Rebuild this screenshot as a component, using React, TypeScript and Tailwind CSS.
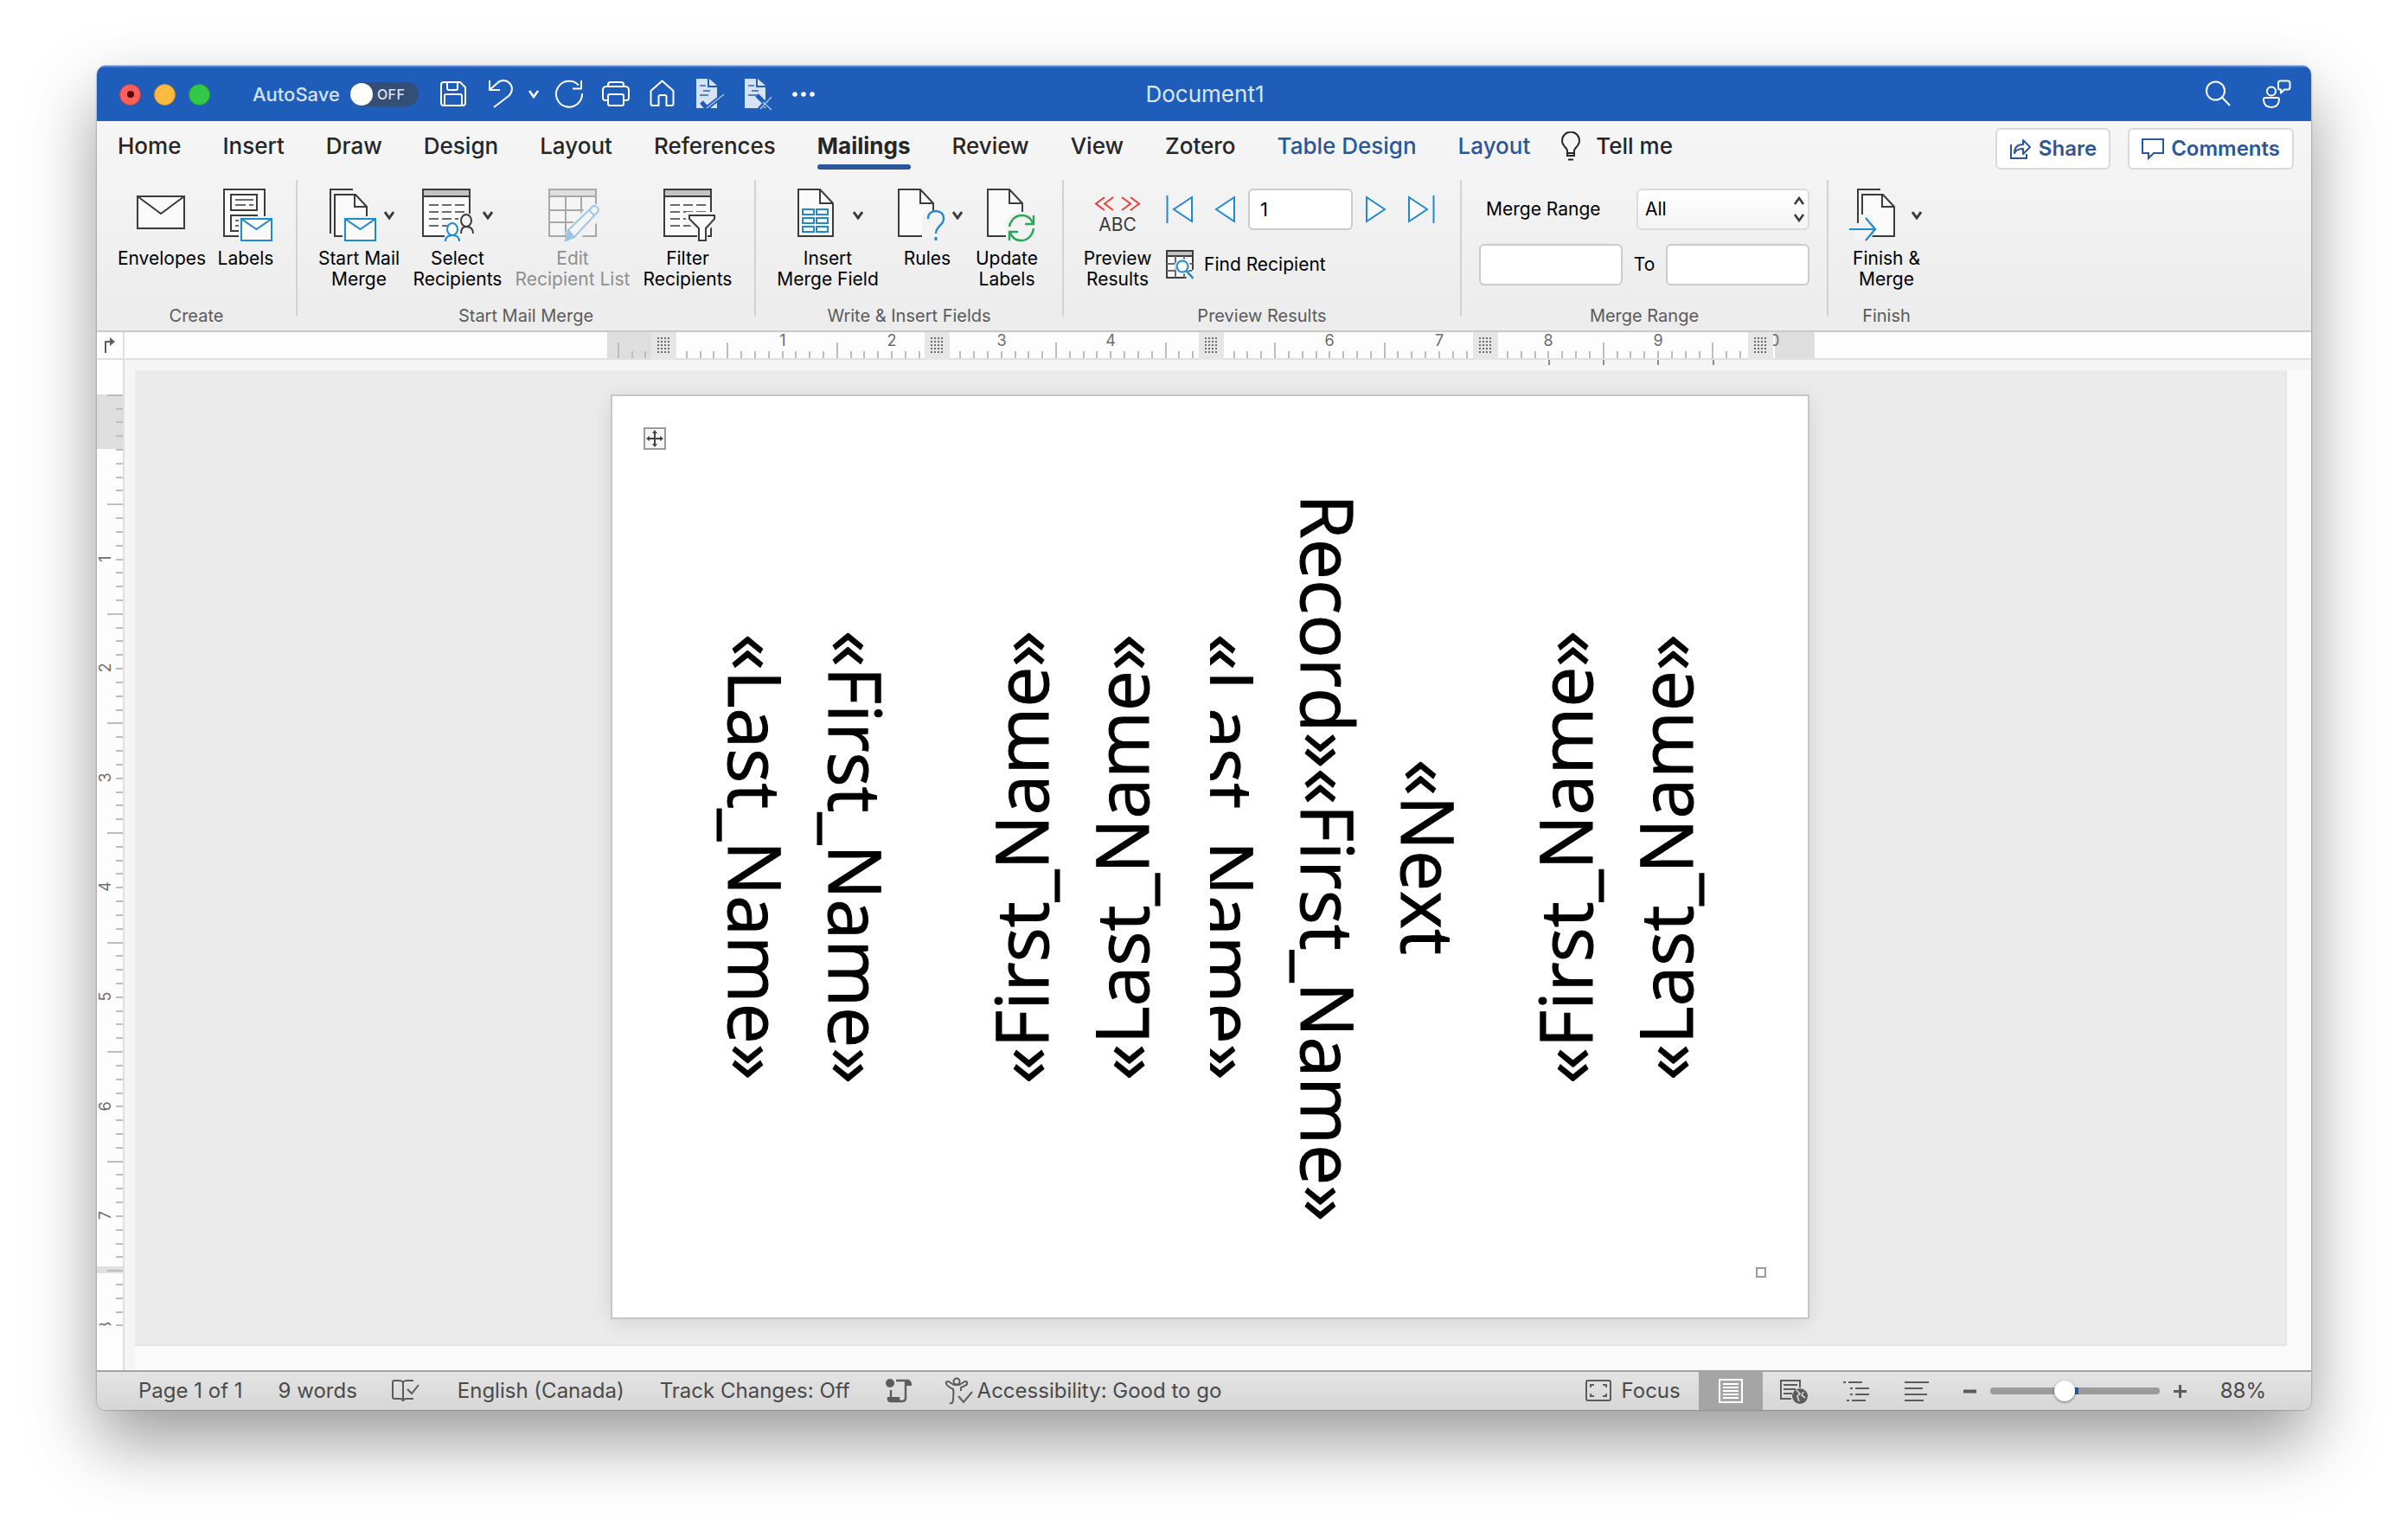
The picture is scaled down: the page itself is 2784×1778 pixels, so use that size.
import React from "react";

type Kids = { children?: React.ReactNode };

const DARK = "#3b3b3b";
const BLUE = "#1f8ad0";
const PAPER = "#fafafa";

/* ---------- small shared pieces ---------- */

function Chevron() {
  return (
    <svg width="12" height="10" viewBox="0 0 12 10" fill="none" stroke={DARK} strokeWidth="3" className="shrink-0">
      <path d="M1 1l5 7 5-7" />
    </svg>
  );
}

function Icon({ children }: Kids) {
  return (
    <svg width="60" height="62" viewBox="0 0 60 62" fill="none" stroke={DARK} strokeWidth="2" className="shrink-0 overflow-visible">
      {children}
    </svg>
  );
}

function MiniEnvelope({ x }: { x: number }) {
  return (
    <g transform={`translate(${x} 35)`}>
      <rect x="-3" y="-3" width="40" height="30" fill="#f3f3f3" stroke="none" />
      <rect x="0" y="0" width="35" height="25" fill={PAPER} stroke={BLUE} />
      <path d="M0 0l17.5 12L35 0" stroke={BLUE} />
    </g>
  );
}

function ListSheet() {
  return (
    <>
      <rect x="1" y="1" width="54" height="54" fill={PAPER} />
      <rect x="1" y="1" width="54" height="8" fill="#c4c2c2" />
      <path d="M8 19h41M8 27h41M8 35h41M8 43h41" stroke="#6a6a6a" strokeDasharray="11 4" />
    </>
  );
}

function Sheet({ x = 6 }: { x?: number }) {
  return (
    <g transform={`translate(${x} 0)`}>
      <path d="M1 1h25l15 16v38H1z" fill={PAPER} />
      <path d="M26 1v16h15" />
    </g>
  );
}

function StackedSheets() {
  return (
    <>
      <path d="M34 1H8v51" />
      <path d="M13 7h24l13 14v34H13z" fill={PAPER} />
      <path d="M36 7v14h14" />
    </>
  );
}

type ToolProps = {
  icon: React.ReactNode;
  lines: string[];
  width: string;
  menu?: boolean;
  disabled?: boolean;
};

function Tool({ icon, lines, width, menu, disabled }: ToolProps) {
  return (
    <button
      type="button"
      disabled={disabled}
      className={`flex flex-col items-center ${width} ${disabled ? "text-[#8f8f8f]" : "text-black"}`}
    >
      <span className={`flex h-[62px] items-center gap-[10px] ${disabled ? "opacity-40" : ""}`}>
        {icon}
        {menu && <Chevron />}
      </span>
      <span className="mt-[7px] text-[21px] leading-6 whitespace-nowrap">
        {lines.map((l) => (
          <span key={l} className="block">
            {l}
          </span>
        ))}
      </span>
    </button>
  );
}

function Group({ name, width, children, last }: Kids & { name: string; width: string; last?: boolean }) {
  return (
    <section
      aria-label={name}
      className={`flex h-[158px] shrink-0 flex-col justify-between ${width} ${last ? "" : "border-r-2 border-[#d2d2d2]"}`}
    >
      <div className="flex pt-[10px]">{children}</div>
      <h2 className="-mb-2.5 text-center text-[20px] leading-[22px] text-[#5b5b5b]">{name}</h2>
    </section>
  );
}

/* ---------- title bar ---------- */

function QuickButton({ label, children }: Kids & { label: string }) {
  return (
    <button type="button" aria-label={label} className="flex shrink-0 items-center">
      {children}
    </button>
  );
}

function Line({ w = 32, children }: Kids & { w?: number }) {
  return (
    <svg width={w} height="34" viewBox={`0 0 ${w} 34`} fill="none" stroke="#fff" strokeWidth="2" strokeLinejoin="round" className="overflow-visible">
      {children}
    </svg>
  );
}

function DocBadge({ children }: Kids) {
  return (
    <svg width="34" height="38" viewBox="0 0 34 38" fill="none">
      <path d="M1 1h13v10h11v24H1z" fill="#d7e3f5" />
      <path d="M16 1l9 8h-9z" fill="#d7e3f5" />
      <path d="M5 9h7M9 15h8M5 20h10" stroke="#2c65bb" strokeWidth="1.6" />
      {children}
    </svg>
  );
}

function TitleBar() {
  return (
    <header className="flex h-16 items-center border-t-2 border-[#4c80cb] bg-[#1f5dba] pr-6 pl-[26px] text-white">
      <div className="flex grow basis-0 items-center">
        <div className="flex gap-[15px]">
          <button type="button" aria-label="Close" className="flex size-[25px] items-center justify-center rounded-full border border-[#c5453f] bg-[#fc605c]">
            <span className="size-2 rounded-full bg-[#5c0300]" />
          </button>
          <button type="button" aria-label="Minimize" className="size-[25px] rounded-full border border-[#c99234] bg-[#fdbc40]" />
          <button type="button" aria-label="Zoom" className="size-[25px] rounded-full border border-[#27a033] bg-[#34c84a]" />
        </div>
        <label htmlFor="autosave" className="ml-[49px] text-[22px] leading-7 font-medium text-[#d6e2f4]">
          AutoSave
        </label>
        <button
          id="autosave"
          type="button"
          role="switch"
          aria-checked="false"
          className="ml-3 flex h-7 w-[79px] shrink-0 items-center rounded-full bg-[#344e75]"
        >
          <span className="size-[26px] rounded-full bg-white" />
          <span className="ml-[5px] text-[16px] leading-5 font-medium tracking-wide text-[#dfe5ee]">OFF</span>
        </button>
        <div className="ml-[25px] flex items-center">
          <QuickButton label="Save">
            <Line w={30}>
              <path d="M4 3h19l6 6v18a3 3 0 0 1-3 3H4a3 3 0 0 1-3-3V6a3 3 0 0 1 3-3z" />
              <path d="M8 3v7a2 2 0 0 0 2 2h8a2 2 0 0 0 2-2V3M5 30V19a2 2 0 0 1 2-2h16a2 2 0 0 1 2 2v11" />
            </Line>
          </QuickButton>
          <div className="ml-[26px] flex items-center gap-[17px]">
            <QuickButton label="Undo">
              <Line w={28}>
                <path d="M1 1v11h12M1 12L10 4C14 0 20 0 24 4s4 10-1 15L6 32" />
              </Line>
            </QuickButton>
            <QuickButton label="Undo history">
              <svg width="14" height="10" viewBox="0 0 14 10" fill="none" stroke="#fff" strokeWidth="2.6">
                <path d="M2 1l5 7 5-7" />
              </svg>
            </QuickButton>
          </div>
          <div className="ml-[18px] flex items-center gap-[22px]">
            <QuickButton label="Repeat">
              <Line w={32}>
                <path d="M31 16a15 15 0 1 1-4-9.500M30 1v9.500h-10" />
              </Line>
            </QuickButton>
            <QuickButton label="Print">
              <Line w={32}>
                <path d="M7 24H4a3 3 0 0 1-3-3v-9a4 4 0 0 1 4-4h22a4 4 0 0 1 4 4v9a3 3 0 0 1-3 3h-3M7 8V6a3 3 0 0 1 3-3h12a3 3 0 0 1 3 3v2" />
                <rect x="7" y="17" width="18" height="13" rx="2" />
              </Line>
            </QuickButton>
            <QuickButton label="Home">
              <Line w={32}>
                <path d="M15.500 1.500L28.500 13v15a2 2 0 0 1-2 2h-6V20a2 2 0 0 0-2-2h-5a2 2 0 0 0-2 2v10h-7a2 2 0 0 1-2-2V13z" />
              </Line>
            </QuickButton>
            <QuickButton label="Accept change">
              <DocBadge>
                <path d="M7 28l6 7L32 20" stroke="#1f5dba" strokeWidth="5" />
                <path d="M13 35L33 19" stroke="#a9c1e6" strokeWidth="1.500" />
              </DocBadge>
            </QuickButton>
            <QuickButton label="Reject change">
              <DocBadge>
                <path d="M15 20l17 17M18 36L32 22" stroke="#1f5dba" strokeWidth="5" />
                <path d="M22 28l10 9M19 36l13-14" stroke="#a9c1e6" strokeWidth="1.500" />
              </DocBadge>
            </QuickButton>
            <QuickButton label="More">
              <svg width="28" height="8" viewBox="0 0 28 8" fill="#fff">
                <circle cx="3" cy="4" r="2.800" />
                <circle cx="13" cy="4" r="2.800" />
                <circle cx="23" cy="4" r="2.800" />
              </svg>
            </QuickButton>
          </div>
        </div>
      </div>
      <h1 className="text-[26px] leading-8 text-[#dde7f6]">Document1</h1>
      <div className="flex grow basis-0 items-center justify-end gap-[38px]">
        <QuickButton label="Search">
          <Line w={28}>
            <circle cx="11.500" cy="13" r="10.500" />
            <path d="M19 20.500l9 9.500" />
          </Line>
        </QuickButton>
        <QuickButton label="Account">
          <Line w={32}>
            <circle cx="10" cy="13.500" r="5" />
            <path d="M3 21h14a2 2 0 0 1 2 2.500C18.500 29 15 32 10 32S1.500 29 1 23.500A2 2 0 0 1 3 21z" />
            <path d="M20 1.500h9a2.500 2.500 0 0 1 2.500 2.500v5a2.500 2.500 0 0 1-2.500 2.500h-4l-4 4v-4h-1a2 2 0 0 1-2-2V4a2.500 2.500 0 0 1 2-2.500z" />
          </Line>
        </QuickButton>
      </div>
    </header>
  );
}

/* ---------- tabs ---------- */

const TABS = ["Home", "Insert", "Draw", "Design", "Layout", "References", "Mailings", "Review", "View", "Zotero", "Table Design", "Layout "];

function Tabs() {
  return (
    <div className="flex h-[68px] items-start justify-between pr-[20px] pl-6">
      <nav className="flex gap-12 pt-3 text-[26px] leading-[34px] font-medium whitespace-nowrap text-[#262626]">
        {TABS.map((t, i) => (
          <button
            key={t}
            type="button"
            aria-current={t === "Mailings" ? "page" : undefined}
            className={`relative ${t === "Mailings" ? "font-bold" : ""} ${i > 9 ? "text-[#2b579a]" : ""}`}
          >
            {t.trim()}
            {t === "Mailings" && <span className="absolute inset-x-0 -bottom-[10px] h-[6px] rounded-full bg-[#2b579a]" />}
          </button>
        ))}
        <button type="button" className="-ml-3 flex items-center gap-[18px]">
          <svg width="22" height="34" viewBox="0 0 22 34" fill="none" stroke="#262626" strokeWidth="2">
            <path d="M7 25v-3c0-3-6-5-6-11.500a10 10 0 0 1 20 0C21 17 15 19 15 22v3M7 25h8v3H7zM8 32.500h6" />
          </svg>
          Tell me
        </button>
      </nav>
      <div className="flex gap-5 pt-2 text-[24px] leading-7 font-semibold text-[#2b579a]">
        <button type="button" className="flex h-12 items-center gap-2 rounded-md border-2 border-[#d9d9d9] bg-white px-[14px]">
          <svg width="26" height="26" viewBox="0 0 26 26" fill="none" stroke="#2b579a" strokeWidth="2">
            <path d="M2 8v16h18v-5" />
            <path d="M6 18c0-7 4-10 10-10V3l8 8-8 8v-6c-5 0-8 1-10 5z" strokeLinejoin="round" />
          </svg>
          Share
        </button>
        <button type="button" className="flex h-12 items-center gap-2 rounded-md border-2 border-[#d9d9d9] bg-white px-[14px]">
          <svg width="26" height="26" viewBox="0 0 26 26" fill="none" stroke="#2b579a" strokeWidth="2">
            <path d="M1 2h24v16H14l-6 6v-6H1z" />
          </svg>
          Comments
        </button>
      </div>
    </div>
  );
}

/* ---------- ribbon ---------- */

function NavArrow({ label, bar, flip }: { label: string; bar?: boolean; flip?: boolean }) {
  return (
    <button type="button" aria-label={label} className={flip ? "-scale-x-100" : ""}>
      <svg width={bar ? 32 : 26} height="34" viewBox={bar ? "0 0 32 34" : "6 0 26 34"} fill={PAPER} stroke={BLUE} strokeWidth="2">
        {bar && <path d="M1.500 1v32" />}
        <path d="M30 3v28L9 17z" />
      </svg>
    </button>
  );
}

const FIELD = "h-12 rounded-md border-2 border-[#cbcbcb] bg-white px-3 text-[22px] text-black";

function Ribbon() {
  return (
    <div className="flex">
      <Group name="Create" width="w-[232px]">
        <div className="flex gap-[13px] pl-6">
          <Tool
            width="w-[102px]"
            lines={["Envelopes"]}
            icon={
              <Icon>
                <rect x="2" y="9" width="54" height="37" fill={PAPER} />
                <path d="M2 9l27 20L56 9" />
              </Icon>
            }
          />
          <Tool
            width="w-[66px]"
            lines={["Labels"]}
            icon={
              <Icon>
                <rect x="5" y="1" width="47" height="54" fill={PAPER} />
                <rect x="13" y="7" width="30" height="18" />
                <path d="M18 13h21M18 19h12M34 19h5" stroke="#6a6a6a" />
                <path d="M43 35v-4H13v18h12" />
                <path d="M18 37h4M18 43h4" stroke="#6a6a6a" />
                <MiniEnvelope x={25} />
              </Icon>
            }
          />
        </div>
      </Group>

      <Group name="Start Mail Merge" width="w-[530px]">
        <div className="flex gap-[13px] pl-[22px]">
          <Tool
            width="w-[98px]"
            menu
            lines={["Start Mail", "Merge"]}
            icon={
              <Icon>
                <StackedSheets />
                <MiniEnvelope x={25} />
              </Icon>
            }
          />
          <Tool
            width="w-[104px]"
            menu
            lines={["Select", "Recipients"]}
            icon={
              <Icon>
                <ListSheet />
                <circle cx="51" cy="37" r="9" fill="#f3f3f3" stroke="none" />
                <path d="M26 62V48l8-12h26v20H48v6z" fill="#f3f3f3" stroke="none" />
                <g>
                  <ellipse cx="51" cy="37" rx="6" ry="7" />
                  <path d="M45 52c0-5 2-8 6-8s8 2 8 8" />
                </g>
                <g stroke={BLUE}>
                  <ellipse cx="35" cy="47" rx="6" ry="7" fill={PAPER} />
                  <path d="M27 61c0-5 3-7 8-7s8 2 8 7" />
                </g>
              </Icon>
            }
          />
          <Tool
            width="w-[136px]"
            disabled
            lines={["Edit", "Recipient List"]}
            icon={
              <Icon>
                <g transform="translate(2 0)">
                  <path d="M1 1h54v54H1z" fill={PAPER} />
                  <path d="M1 1h54v8H1z" fill="#c4c2c2" />
                  <path d="M20 9v46M38 9v46M1 25h54M1 39h54" />
                  <path d="M20 62V50L48 16l14 4v14L32 62z" fill="#f3f3f3" stroke="none" />
                  <path d="M20 60l3-12 28-27c3-3 9 2 6 6L30 56z" fill={PAPER} stroke={BLUE} />
                  <path d="M20 60l3-12 7 8zM47 25l6 6" fill={BLUE} stroke={BLUE} />
                </g>
              </Icon>
            }
          />
          <Tool
            width="w-[104px]"
            lines={["Filter", "Recipients"]}
            icon={
              <Icon>
                <g transform="translate(2 0)">
                  <ListSheet />
                  <path d="M26 27h36v10L51 50v12H39V50L26 38z" fill="#f3f3f3" stroke="none" />
                  <path d="M30 31h29v4L49 46v14h-8V46L30 35z" fill={PAPER} />
                </g>
              </Icon>
            }
          />
        </div>
      </Group>

      <Group name="Write & Insert Fields" width="w-[356px]">
        <div className="flex gap-4 pl-6">
          <Tool
            width="w-[118px]"
            menu
            lines={["Insert", "Merge Field"]}
            icon={
              <Icon>
                <Sheet />
                <g stroke={BLUE}>
                  {[24, 34, 44].map((y) => (
                    <g key={y}>
                      <rect x="12" y={y} width="13" height="6" />
                      <rect x="28" y={y} width="13" height="6" />
                    </g>
                  ))}
                </g>
              </Icon>
            }
          />
          <Tool
            width="w-[80px]"
            menu
            lines={["Rules"]}
            icon={
              <Icon>
                <g transform="translate(1 0)">
                  <Sheet />
                  <path d="M34 56V34l4-8h12v30z" fill="#f3f3f3" stroke="none" />
                  <path d="M41 35c0-6 4-9 9-9s9 3 9 9c0 8-9 8-9 17" stroke={BLUE} strokeWidth="2.400" />
                  <path d="M50 56v4" stroke={BLUE} strokeWidth="3" />
                </g>
              </Icon>
            }
          />
          <Tool
            width="w-[72px]"
            lines={["Update", "Labels"]}
            icon={
              <Icon>
                <g transform="translate(3 0)">
                  <Sheet x={4} />
                  <path d="M26 57V36l10-9h14v30z" fill="#f3f3f3" stroke="none" />
                  <g stroke="#27a755" strokeWidth="2.400">
                    <path d="M30 44c1-7 7-13 14-13 6 0 11 3 13 9M58 46c-1 8-7 14-14 14-6 0-11-3-13-9" />
                    <path d="M58 31v10H48M30 60V50h10" />
                  </g>
                </g>
              </Icon>
            }
          />
        </div>
      </Group>

      <Group name="Preview Results" width="w-[460px]">
        <div className="flex gap-4 pl-[22px]">
          <Tool
            width="w-[80px]"
            lines={["Preview", "Results"]}
            icon={
              <span className="flex flex-col items-center">
                <svg width="54" height="17" viewBox="0 0 54 17" fill="none" stroke="#ee3f3c" strokeWidth="2">
                  <path d="M12 1L2 8.500 12 16M22 1L12 8.500 22 16M32 1l10 7.500L32 16M42 1l10 7.500L42 16" />
                </svg>
                <span className="mt-1 text-[21px] leading-6 text-[#3b3b3b]">ABC</span>
              </span>
            }
          />
          <div className="flex flex-col gap-4">
            <div className="flex h-12 items-center">
              <NavArrow label="First record" bar />
              <span className="ml-[23px] flex">
                <NavArrow label="Previous record" />
              </span>
              <input aria-label="Record number" defaultValue="1" className={`${FIELD} mx-[14px] w-[121px]`} />
              <NavArrow label="Next record" flip />
              <span className="ml-[23px] flex">
                <NavArrow label="Last record" bar flip />
              </span>
            </div>
            <button type="button" className="flex h-12 items-center gap-3 text-[21px] leading-6">
              <svg width="32" height="34" viewBox="0 0 32 34" fill="none" stroke={DARK} strokeWidth="2">
                <rect x="1" y="1" width="30" height="31" fill={PAPER} />
                <path d="M1 1h30v6H1z" fill="#c4c2c2" />
                <path d="M1 16h30M1 24h30M11 7v25M21 7v25" stroke="#6a6a6a" />
                <circle cx="19" cy="19" r="9" fill="#f3f3f3" stroke="none" />
                <path d="M22 34l10-1V22z" fill="#f3f3f3" stroke="none" />
                <circle cx="19" cy="19" r="6.500" stroke={BLUE} fill={PAPER} />
                <path d="M23.500 24l8 9" stroke={BLUE} strokeWidth="2.600" />
              </svg>
              Find Recipient
            </button>
          </div>
        </div>
      </Group>

      <Group name="Merge Range" width="w-[424px]">
        <div className="flex w-full flex-col gap-4 px-5 text-[21px] leading-6">
          <div className="flex h-12 items-center justify-between pl-2">
            <label htmlFor="merge-range">Merge Range</label>
            <span className="relative">
              <select id="merge-range" defaultValue="All" className="h-12 w-[200px] appearance-none rounded-md border-2 border-[#dcdcdc] bg-linear-to-b from-white to-[#f4f4f4] px-2 text-[21px] text-black">
                <option>All</option>
              </select>
              <svg width="14" height="30" viewBox="0 0 14 30" fill="none" stroke={DARK} strokeWidth="2.600" className="pointer-events-none absolute top-[9px] right-[5px]">
                <path d="M2 9l5-7 5 7M2 21l5 7 5-7" />
              </svg>
            </span>
          </div>
          <div className="flex h-12 items-center justify-between">
            <input aria-label="From record" className={`${FIELD} w-[166px]`} />
            <label htmlFor="to-record">To</label>
            <input id="to-record" className={`${FIELD} w-[166px]`} />
          </div>
        </div>
      </Group>

      <Group name="Finish" width="w-[134px]" last>
        <div className="flex pl-[26px]">
          <Tool
            width="w-[82px]"
            menu
            lines={["Finish &", "Merge"]}
            icon={
              <Icon>
                <StackedSheets />
                <path d="M4 58V40h8V30h12l6 17-8 12z" fill="#f3f3f3" stroke="none" />
                <path d="M-2 47h30M17 34l11 13-11 13" stroke={BLUE} strokeWidth="2.200" />
              </Icon>
            }
          />
        </div>
      </Group>
    </div>
  );
}

/* ---------- rulers ---------- */

const STEP = 15.82;

function HorizontalRuler() {
  const ticks = Array.from({ length: 84 }, (_, i) => i - 4);
  return (
    <svg width="1396" height="30" viewBox="0 0 1396 30" className="relative overflow-visible">
      <rect x="0" y="0" width="51" height="30" fill="#dedede" />
      <rect x="1350" y="0" width="46" height="30" fill="#dedede" />
      {ticks.map((k) => (
        <path key={k} d={`M${Math.round(76 + k * STEP)} ${(k + 80) % 8 === 4 ? 12 : 22}V30`} stroke="#bdbdbd" strokeWidth="2" />
      ))}
      <path d="M1089 32v6M1152 32v6M1215 32v6M1279 32v6" stroke="#8a8a8a" strokeWidth="2" />
      <g fontSize="18" fill="#6c6c6c" textAnchor="middle">
        {[1, 2, 3, 4, 6, 7, 8, 9].map((n) => (
          <text key={n} x={Math.round(76 + n * 126.5)} y="16">
            {n}
          </text>
        ))}
        <text x="1346" y="16">
          10
        </text>
      </g>
      {[51, 367, 684, 1001, 1319].map((x) => (
        <g key={x}>
          <rect x={x} y="0" width="29" height="32" fill="#e6e6e6" />
          <path
            d={`M${x + 7} 7h15M${x + 7} 11h15M${x + 7} 15h15M${x + 7} 19h15M${x + 7} 23h15`}
            stroke="#6b6b6b"
            strokeWidth="2"
            strokeDasharray="2 2"
          />
        </g>
      ))}
    </svg>
  );
}

function VerticalRuler() {
  const ticks = Array.from({ length: 69 }, (_, i) => i - 4);
  return (
    <svg width="30" height="1166" viewBox="0 0 30 1166" className="shrink-0">
      <rect x="0" y="40" width="30" height="63" fill="#dedede" />
      <rect x="0" y="1048" width="30" height="8" fill="#e0e0e0" />
      {ticks.map((k) => (
        <path key={k} d={`M${(k + 80) % 8 === 4 ? 12 : 22} ${Math.round(104 + k * STEP)}H30`} stroke="#bdbdbd" strokeWidth="2" />
      ))}
      <g fontSize="18" fill="#6c6c6c" textAnchor="middle">
        {[1, 2, 3, 4, 5, 6, 7].map((n) => (
          <text key={n} transform={`translate(16 ${Math.round(103 + n * 126.6)}) rotate(-90)`}>
            {n}
          </text>
        ))}
      </g>
      <path d="M3 1116c3-4 4 1 7-1 2-2 4-2 6 1" fill="none" stroke="#6c6c6c" strokeWidth="1.600" />
    </svg>
  );
}

/* ---------- document ---------- */

const VERTICAL = "[writing-mode:vertical-rl] text-center whitespace-nowrap shrink-0";

function DocumentPage() {
  return (
    <article className="relative h-[1069px] w-[1386px] shrink-0 border-2 border-[#c6c6c6] bg-white shadow-[0_4px_24px_rgba(0,0,0,0.10)]">
      <button type="button" aria-label="Move table" className="absolute top-9 left-9 flex size-[26px] items-center justify-center border-2 border-[#9b9b9b] bg-[#f6f6f6]">
        <svg width="20" height="20" viewBox="0 0 20 20" fill="#444" stroke="#444" strokeWidth="2">
          <path d="M10 3v14M3 10h14" />
          <path d="M10 0l3 4H7zM10 20l3-4H7zM0 10l4-3v6zM20 10l-4-3v6z" stroke="none" />
        </svg>
      </button>
      <table className="mx-auto mt-[3px] h-[1060px] w-[1268px] table-fixed font-['Open_Sans',sans-serif] text-[84px] leading-[116px] text-black [-webkit-text-stroke:1px_black]">
        <tbody>
          <tr>
            <td className="w-1/4">
              <div className="flex justify-center pl-4">
                <div className={VERTICAL}>
                  <p>«First_Name»</p>
                  <p>«Last_Name»</p>
                </div>
              </div>
            </td>
            <td className="w-1/4">
              <div className="flex justify-center pr-1.5">
                <div className={`${VERTICAL} rotate-180`}>
                  <p>«First_Name»</p>
                  <p>«Last_Name»</p>
                </div>
              </div>
            </td>
            <td className="w-1/4">
              <div className="flex justify-end overflow-hidden pr-1.5">
                <div className={VERTICAL}>
                  <p>«Next</p>
                  <p>Record»«First_Name»</p>
                  <p>«Last_Name»</p>
                </div>
              </div>
            </td>
            <td className="w-1/4">
              <div className="flex justify-center pr-4">
                <div className={`${VERTICAL} rotate-180`}>
                  <p>«First_Name»</p>
                  <p>«Last_Name»</p>
                </div>
              </div>
            </td>
          </tr>
        </tbody>
      </table>
      <span className="absolute right-12 bottom-[46px] size-3 border-2 border-[#9b9b9b] bg-white" />
    </article>
  );
}

/* ---------- status bar ---------- */

function StatusIcon({ w = 32, children }: Kids & { w?: number }) {
  return (
    <svg width={w} height="32" viewBox={`0 0 ${w} 32`} fill="none" stroke="#5c5c5c" strokeWidth="2" className="shrink-0 overflow-visible">
      {children}
    </svg>
  );
}

function StatusBar() {
  return (
    <footer className="flex h-[46px] shrink-0 items-center justify-between border-t-2 border-[#a3a3a3] bg-linear-to-b from-[#e4e4e4] to-[#d6d6d6] pr-[52px] pl-12 text-[24px] leading-7 whitespace-nowrap text-[#4a4a4a]">
      <div className="flex items-center">
        <button type="button">Page 1 of 1</button>
        <button type="button" className="ml-[41px]">9 words</button>
        <button type="button" aria-label="Proofing" className="ml-10">
          <StatusIcon>
            <path d="M13 6c-1-2-3-2-5-2H3a2 2 0 0 0-2 2v17a2 2 0 0 0 2 2h6c2 0 4 1 4 3 0-2 2-3 4-3h8M13 28V6c1-2 3-2 5-2h7" />
            <path d="M18 14l5 5 8-10" />
          </StatusIcon>
        </button>
        <button type="button" className="ml-11">English (Canada)</button>
        <button type="button" className="ml-[41px]">Track Changes: Off</button>
        <button type="button" aria-label="Macro recorder" className="ml-10">
          <StatusIcon w={30}>
            <circle cx="6" cy="7" r="5" fill="#5c5c5c" stroke="none" />
            <path d="M13 4h14M24 5v19c0 3-2 4-4 4H6M7 15v9" strokeWidth="2.400" />
            <path d="M24 4c3-1 6 0 6 5h-6z" fill="#5c5c5c" />
            <path d="M3 23h14c0 3 1 5 3 6H6c-2 0-4-2-3-6z" fill="#5c5c5c" stroke="none" />
          </StatusIcon>
        </button>
        <button type="button" className="ml-10 flex items-center gap-[5px]">
          <StatusIcon>
            <circle cx="13" cy="5" r="3.500" />
            <path d="M1 8c-1-3 2-4 4-2l5 3h6l5-3c2-2 5-1 4 2-1 2-5 3-7 4v4M5 30c3 1 4-1 4-4 0-5 1-9 0-12-2-1-6-3-8-6" strokeLinejoin="round" />
            <path d="M15 22l6 7 10-12" />
          </StatusIcon>
          Accessibility: Good to go
        </button>
      </div>
      <div className="flex h-full items-center">
        <button type="button" className="mr-[21px] flex items-center gap-3">
          <StatusIcon w={30}>
            <rect x="1" y="4" width="28" height="23" rx="2" />
            <path d="M6 12V9h4M20 9h4v3M24 19v3h-4M10 22H6v-3" />
          </StatusIcon>
          Focus
        </button>
        <button type="button" aria-label="Print layout" aria-pressed="true" className="flex h-full w-[74px] items-center justify-center bg-[#a5a5a5]">
          <svg width="28" height="28" viewBox="0 0 28 28" fill="none" stroke="#fff" strokeWidth="2">
            <rect x="1" y="1" width="26" height="26" />
            <path d="M5 6h18M5 10h18M5 14h18M5 18h18M5 22h18" />
          </svg>
        </button>
        <button type="button" aria-label="Web layout" className="ml-5">
          <StatusIcon>
            <path d="M23 12V4H1v21h12M4 9h16M4 14h14M4 19h10" />
            <circle cx="23" cy="22" r="9" fill="#5c5c5c" stroke="none" />
            <path d="M19 15l4 4-3 3 2 6M27 17l-2 4 4 3" stroke="#d9d9d9" strokeWidth="1.600" />
          </StatusIcon>
        </button>
        <button type="button" aria-label="Outline" className="ml-[41px]">
          <StatusIcon w={30}>
            <path d="M0 6h3M6 6h16M8 13h3M14 13h16M8 20h3M14 20h16M4 27h3M10 27h16" />
          </StatusIcon>
        </button>
        <button type="button" aria-label="Draft" className="ml-[41px]">
          <StatusIcon w={30}>
            <path d="M0 6h28M0 13h21M0 20h26M0 27h22" />
          </StatusIcon>
        </button>
        <button type="button" aria-label="Zoom out" className="ml-[37px]">
          <svg width="17" height="17" viewBox="0 0 17 17" stroke="#5c5c5c" strokeWidth="4">
            <path d="M1 8.500h15" />
          </svg>
        </button>
        <input
          type="range"
          aria-label="Zoom level"
          min="0"
          max="100"
          defaultValue="43"
          className="mx-[15px] h-2 w-[196px] appearance-none rounded-full bg-[linear-gradient(90deg,#9b9b9b_50%,#2b579a_50%,#2b579a_52%,#9b9b9b_52%)] [&::-webkit-slider-thumb]:size-6 [&::-webkit-slider-thumb]:appearance-none [&::-webkit-slider-thumb]:rounded-full [&::-webkit-slider-thumb]:bg-white [&::-webkit-slider-thumb]:shadow-[0_1px_3px_rgba(0,0,0,0.5)]"
        />
        <button type="button" aria-label="Zoom in">
          <svg width="17" height="17" viewBox="0 0 17 17" stroke="#5c5c5c" strokeWidth="3">
            <path d="M1 8.500h15M8.500 1v15" />
          </svg>
        </button>
        <button type="button" className="ml-[38px]">88%</button>
      </div>
    </footer>
  );
}

/* ---------- window ---------- */

export default function App() {
  return (
    <div className="flex min-h-screen flex-col bg-white px-28 pt-[76px] pb-[148px] font-['Inter',sans-serif] antialiased">
      <main className="flex flex-1 flex-col overflow-hidden rounded-[10px] shadow-[0_0_2px_rgba(0,0,0,0.55),0_36px_80px_rgba(0,0,0,0.4)]">
        <TitleBar />
        <div className="border-b-2 border-[#c9c9c9] bg-linear-to-b from-[#f6f6f6] to-[#ececec] pb-4">
          <Tabs />
          <Ribbon />
        </div>

        <div className="flex border-b-2 border-[#e0e0e0] bg-[#fdfdfd]">
          <button type="button" aria-label="Tab stop" className="flex h-[30px] w-8 items-center justify-center border-r-2 border-[#e0e0e0]">
            <svg width="14" height="20" viewBox="0 0 14 20" fill="none" stroke="#5e5e5e" strokeWidth="2">
              <path d="M2 19V6h6" />
              <path d="M7 1l6 5-6 5z" fill="#5e5e5e" stroke="none" />
            </svg>
          </button>
          <div className="flex h-[30px] flex-1 justify-center pr-7 pl-3">
            <HorizontalRuler />
          </div>
        </div>

        <div className="flex flex-1 bg-[#fafafa]">
          <div className="border-r-2 border-[#e0e0e0] bg-[#fdfdfd]">
            <VerticalRuler />
          </div>
          <div className="flex flex-1 bg-[#f5f5f5] pt-3 pl-3">
            <div className="flex flex-1 flex-col bg-[#fafafa] pr-7 pb-7">
              <div className="flex flex-1 items-start justify-center border-r-2 border-b-2 border-[#e6e6e6] bg-[#ebebeb] pt-7">
                <DocumentPage />
              </div>
            </div>
          </div>
        </div>

        <StatusBar />
      </main>
    </div>
  );
}
